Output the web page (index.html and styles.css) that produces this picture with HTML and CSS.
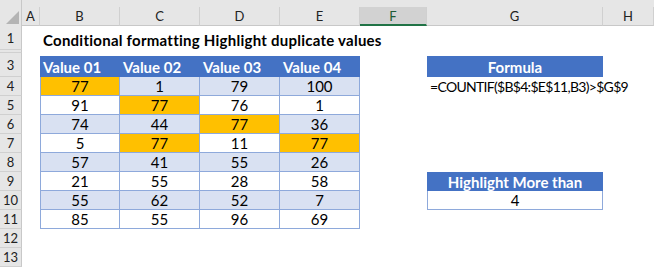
FILE: index.html
```html
<!DOCTYPE html>
<html>
<head>
<meta charset="utf-8">
<link rel="stylesheet" href="styles.css">
</head>
<body>
<div class="sheet">
  <div class="corner"><svg width="22" height="26" viewBox="0 0 22 26"><polygon points="19,11 19,24 6,24" fill="#b4b4b4"/></svg></div>
  <div class="ch"><span>A</span></div>
  <div class="ch"><span>B</span></div>
  <div class="ch"><span>C</span></div>
  <div class="ch"><span>D</span></div>
  <div class="ch"><span>E</span></div>
  <div class="ch sel"><span>F</span></div>
  <div class="ch"><span>G</span></div>
  <div class="ch"><span>H</span></div>

  <div class="rh r1">1</div>
  <div class="rh r2"></div>
  <div class="rh r3">3</div>
  <div class="rh">4</div>
  <div class="rh">5</div>
  <div class="rh">6</div>
  <div class="rh">7</div>
  <div class="rh">8</div>
  <div class="rh">9</div>
  <div class="rh">10</div>
  <div class="rh">11</div>
  <div class="rh">12</div>
  <div class="rh">13</div>

  <div class="title">Conditional formatting Highlight duplicate values</div>

  <div class="table">
    <div class="th">Value 01</div><div class="th">Value 02</div><div class="th">Value 03</div><div class="th">Value 04</div>
    <div class="td band hl">77</div><div class="td band">1</div><div class="td band">79</div><div class="td band">100</div>
    <div class="td">91</div><div class="td hl">77</div><div class="td">76</div><div class="td">1</div>
    <div class="td band">74</div><div class="td band">44</div><div class="td band hl">77</div><div class="td band">36</div>
    <div class="td">5</div><div class="td hl">77</div><div class="td">11</div><div class="td hl">77</div>
    <div class="td band">57</div><div class="td band">41</div><div class="td band">55</div><div class="td band">26</div>
    <div class="td">21</div><div class="td">55</div><div class="td">28</div><div class="td">58</div>
    <div class="td band">55</div><div class="td band">62</div><div class="td band">52</div><div class="td band">7</div>
    <div class="td">85</div><div class="td">55</div><div class="td">96</div><div class="td">69</div>
  </div>

  <div class="side formula-h">Formula</div>
  <div class="formula">=COUNTIF($B$4:$E$11,B3)&gt;$G$9</div>
  <div class="side more-h">Highlight More than</div>
  <div class="more-v">4</div>
</div>
</body>
</html>
```

FILE: styles.css
```css
html, body {
  margin: 0;
  padding: 0;
  background: #ffffff;
}
body {
  font-family: Lato, "Open Sans", "Liberation Sans", sans-serif;
  color: #000;
}
.sheet {
  display: grid;
  grid-template-columns: 22px 18px 80px 80px 80px 80px 67px 176px 51px;
  grid-template-rows: 26px 24px 3px 24px repeat(10, 19px);
  width: 654px;
  height: 267px;
  overflow: hidden;
}
.corner {
  grid-column: 1;
  grid-row: 1;
  background: #e6e6e6;
  border-right: 1px solid #c8c8c8;
  box-sizing: border-box;
}
.corner svg { display: block; }
.ch {
  background: #e6e6e6;
  padding-top: 7px;
  box-sizing: border-box;
  grid-row: 1;
}
.ch span {
  display: flex;
  align-items: center;
  justify-content: center;
  height: 19px;
  box-sizing: border-box;
  border-right: 1px solid #d0d0d0;
  border-bottom: 1px solid #c8c8c8;
  font-size: 13px;
  color: #222;
}
.ch.sel span {
  background: #d2d2d2;
  border-bottom: 2px solid #217346;
  color: #1d5c36;
}
.rh {
  grid-column: 1;
  background: #e6e6e6;
  border-right: 1px solid #c8c8c8;
  border-bottom: 1px solid #d0d0d0;
  box-sizing: border-box;
  font-size: 13px;
  color: #222;
  display: flex;
  align-items: center;
  justify-content: center;
}
.rh.r1 { grid-row: 2; }
.rh.r2 { grid-row: 3; }
.rh.r3 { grid-row: 4; }
.title {
  grid-column: 3 / 8;
  grid-row: 2;
  font-weight: bold;
  font-size: 15px;
  letter-spacing: 0.25px;
  padding-left: 3px;
  padding-top: 4px;
  display: flex;
  align-items: center;
  white-space: nowrap;
}
.table {
  grid-column: 3 / 7;
  grid-row: 4 / 13;
  display: grid;
  grid-template-columns: repeat(4, 80px);
  grid-template-rows: 24px repeat(8, 19px);
  align-self: start;
}
.th {
  margin-top: 3px;
  background: #4472c4;
  color: #fff;
  font-weight: bold;
  font-size: 15px;
  padding-left: 3px;
  display: flex;
  align-items: center;
}
.th:last-child { border-right: 1px solid #8ea9db; }
.td {
  font-size: 15px;
  display: flex;
  align-items: center;
  justify-content: center;
  border-right: 1px solid #8ea9db;
  border-bottom: 1px solid #8ea9db;
  background: #fff;
}
.td:nth-child(4n+1) { border-left: 1px solid #8ea9db; }
.td.band { background: #d9e1f2; }
.td.hl { background: #ffc000; }
.side {
  grid-column: 8;
  background: #4472c4;
  color: #fff;
  font-weight: bold;
  font-size: 15px;
  display: flex;
  align-items: center;
  justify-content: center;
}
.formula-h {
  grid-row: 4;
  margin-top: 3px;
}
.formula {
  grid-column: 8 / 10;
  grid-row: 5;
  font-size: 14px;
  letter-spacing: -0.7px;
  padding-left: 3px;
  display: flex;
  align-items: center;
  white-space: nowrap;
}
.more-h { grid-row: 10; }
.more-v {
  grid-column: 8;
  grid-row: 11;
  font-size: 15px;
  border: 1px solid #8ea9db;
  border-top: none;
  display: flex;
  align-items: center;
  justify-content: center;
}
```
